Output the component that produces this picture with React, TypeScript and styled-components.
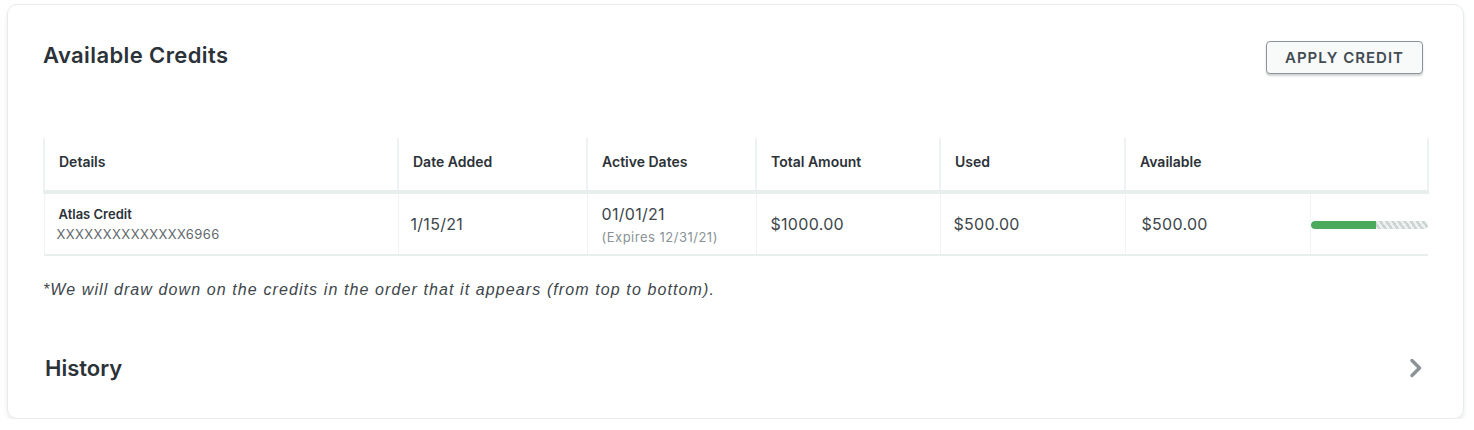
import styled, { createGlobalStyle } from 'styled-components';

const GlobalStyle = createGlobalStyle`
  body {
    margin: 0;
    background: #fff;
    font-family: Inter, "Liberation Sans", Arial, sans-serif;
    color: #2b3238;
  }
`;

const Card = styled.section`
  margin: 4px 10px 0 7px;
  height: 415px;
  box-sizing: border-box;
  border: 1px solid #e6ebeb;
  border-radius: 10px;
  box-shadow: 0 3px 4px rgba(0, 0, 0, 0.08);
  padding: 0 36px 0 35px;
  display: flex;
  flex-direction: column;
`;

const Header = styled.div`
  display: flex;
  justify-content: space-between;
  align-items: flex-start;
  padding-top: 36px;
  height: 133px;
  box-sizing: border-box;
`;

const Title = styled.h2`
  margin: 1px 0 0;
  font-size: 22px;
  line-height: 27px;
  font-weight: 600;
  letter-spacing: 0.4px;
  color: #2b3238;
`;

const ApplyButton = styled.button`
  margin-right: 4px;
  height: 33px;
  width: 157px;
  border: 1px solid #8b9599;
  border-radius: 4px;
  background: #f8fafa;
  box-shadow: 0 2px 2px rgba(0, 0, 0, 0.18);
  font-family: Inter, "Liberation Sans", sans-serif;
  font-size: 15px;
  font-weight: 600;
  letter-spacing: 1px;
  color: #414b51;
  cursor: pointer;
`;

const Table = styled.table`
  width: 1384px;
  border-collapse: collapse;
  table-layout: fixed;
`;

const Th = styled.th<{ $edge?: boolean }>`
  height: 46px;
  padding: 0 0 6px 14px;
  text-align: left;
  font-size: 14px;
  font-weight: 600;
  color: #2b3238;
  border-left: 2px solid #eef2f2;
  border-right: ${p => (p.$edge ? '2px solid #eef2f2' : 'none')};
  border-bottom: 4px solid #e8eeee;
`;

const Td = styled.td<{ $pad?: number }>`
  height: 60px;
  padding: 0 0 0 ${p => p.$pad ?? 14}px;
  font-size: 16px;
  letter-spacing: 0.3px;
  color: #3d464b;
  border-left: 1px solid #f1f4f4;
  border-bottom: 2px solid #e8eeee;
  vertical-align: middle;
`;

const Name = styled.div`
  font-size: 13px;
  font-weight: 600;
  letter-spacing: 0;
  color: #2b3238;
  padding-left: 2px;
`;

const Masked = styled.div`
  margin-top: 4px;
  font-size: 13px;
  letter-spacing: 0.4px;
  color: #5f676c;
`;

const Expires = styled.div`
  margin-top: 5px;
  font-size: 13px;
  letter-spacing: 0.5px;
  color: #8a9296;
`;

const Bar = styled.div`
  height: 8px;
  margin-top: 1px;
  display: flex;
  border-radius: 4px;
  overflow: hidden;
  background: repeating-linear-gradient(
    55deg,
    #cdd4d4 0 2.5px,
    #eef1f1 2.5px 5px
  );
`;

const Fill = styled.div`
  height: 100%;
  background: #4caa5c;
  border-radius: 4px 0 0 4px;
`;

const Note = styled.p`
  margin: 25px 0 0;
  font-family: "Liberation Sans", Arial, sans-serif;
  font-style: italic;
  font-size: 16px;
  letter-spacing: 1.1px;
  color: #3d464b;
`;

const HistoryRow = styled.div`
  display: flex;
  justify-content: space-between;
  align-items: center;
  margin-top: 56px;
  padding-left: 2px;
`;

const HistoryTitle = styled.h2`
  margin: 0;
  font-size: 22px;
  font-weight: 600;
  letter-spacing: 0;
  color: #2b3238;
`;

const columns = [
  { label: 'Details', width: 354 },
  { label: 'Date Added', width: 189 },
  { label: 'Active Dates', width: 169 },
  { label: 'Total Amount', width: 184 },
  { label: 'Used', width: 185 },
  { label: 'Available', width: 185 },
];

const fillRatio = 0.56;

export default function App() {
  return (
    <>
      <GlobalStyle />
      <Card>
        <Header>
          <Title>Available Credits</Title>
          <ApplyButton type="button">APPLY CREDIT</ApplyButton>
        </Header>
        <Table>
          <colgroup>
            {columns.map(c => (
              <col key={c.label} style={{ width: c.width }} />
            ))}
            <col style={{ width: 118 }} />
          </colgroup>
          <thead>
            <tr>
              {columns.map(c => (
                <Th key={c.label} colSpan={c.label === 'Available' ? 2 : 1} $edge={c.label === 'Available'}>
                  {c.label}
                </Th>
              ))}
            </tr>
          </thead>
          <tbody>
            <tr>
              <Td $pad={12}>
                <Name>Atlas Credit</Name>
                <Masked>XXXXXXXXXXXXXX6966</Masked>
              </Td>
              <Td $pad={12}>1/15/21</Td>
              <Td>
                01/01/21
                <Expires>(Expires 12/31/21)</Expires>
              </Td>
              <Td>$1000.00</Td>
              <Td $pad={13}>$500.00</Td>
              <Td $pad={16}>$500.00</Td>
              <Td $pad={0}>
                <Bar>
                  <Fill style={{ width: `${fillRatio * 100}%` }} />
                </Bar>
              </Td>
            </tr>
          </tbody>
        </Table>
        <Note>*We will draw down on the credits in the order that it appears (from top to bottom).</Note>
        <HistoryRow>
          <HistoryTitle>History</HistoryTitle>
          <svg width="14" height="22" viewBox="0 0 14 22" style={{ marginRight: 4 }}>
            <path d="M3 3.5 L10.5 11 L3 18.5" fill="none" stroke="#8a9296" strokeWidth="3.4" strokeLinecap="round" strokeLinejoin="round" />
          </svg>
        </HistoryRow>
      </Card>
    </>
  );
}
